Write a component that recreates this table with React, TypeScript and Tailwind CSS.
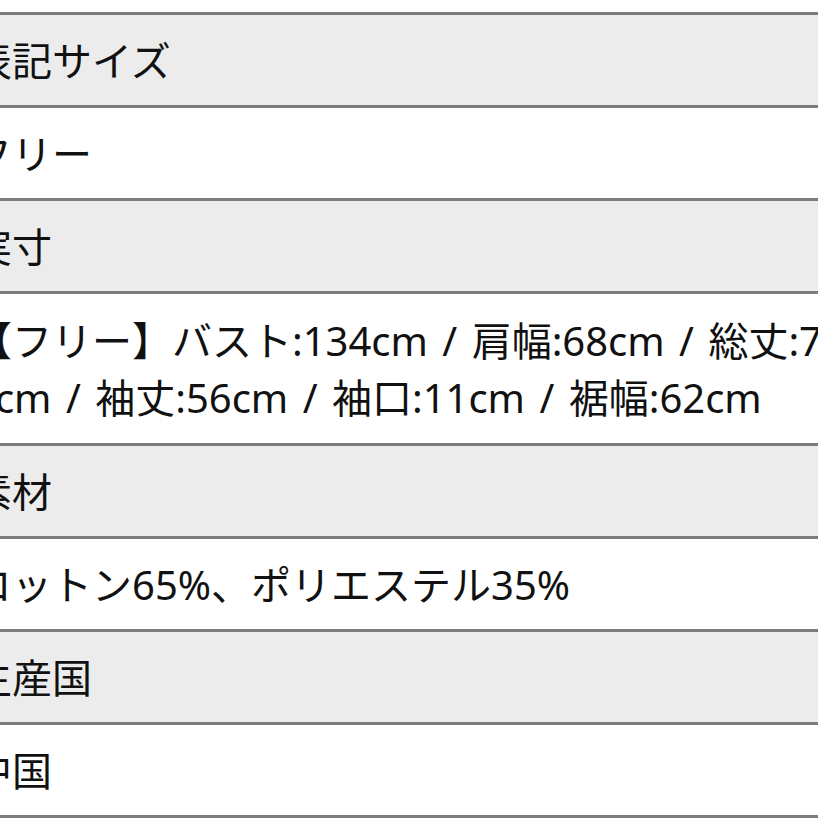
import React from "react";

const rows: { head: boolean; lines: string[]; tall?: boolean }[] = [
  { head: true, lines: ["表記サイズ"] },
  { head: false, lines: ["フリー"] },
  { head: true, lines: ["実寸"] },
  {
    head: false,
    tall: true,
    lines: [
      "【フリー】バスト:134cm / 肩幅:68cm / 総丈:70",
      "0cm / 袖丈:56cm / 袖口:11cm / 裾幅:62cm",
    ],
  },
  { head: true, lines: ["素材"] },
  { head: false, lines: ["コットン65%、ポリエステル35%"] },
  { head: true, lines: ["生産国"] },
  { head: false, lines: ["中国"] },
];

export default function App() {
  return (
    <div
      className="w-[818px] h-[818px] overflow-hidden bg-white pt-[12px]"
      style={{ fontFamily: '"Noto Sans", "Noto Sans CJK JP", sans-serif' }}
    >
      <div className="w-[1000px] border-b-[3px] border-[#7d7d7d]">
        {rows.map((r, i) => (
          <div
            key={i}
            className={`border-t-[3px] border-[#7d7d7d] flex flex-col justify-center ${
              r.head ? "bg-[#ececec]" : "bg-white"
            } ${r.tall ? "h-[152px]" : "h-[93px]"}`}
          >
            {r.lines.map((l, j) => (
              <div
                key={j}
                className="ml-[-28px] whitespace-nowrap text-[40px] leading-[57px] text-[#111111] [word-spacing:4px]"
              >
                {l}
              </div>
            ))}
          </div>
        ))}
      </div>
    </div>
  );
}
